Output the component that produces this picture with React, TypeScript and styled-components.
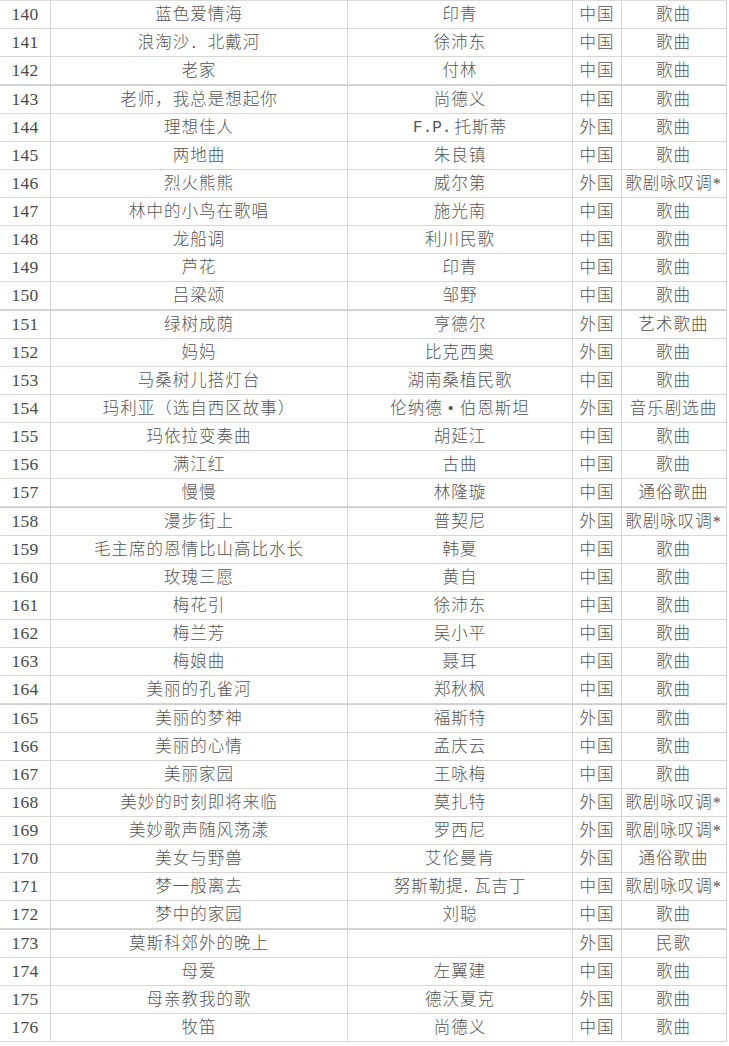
import React from 'react'
import styled, { createGlobalStyle } from 'styled-components'

const GlobalStyle = createGlobalStyle`
  html, body {
    margin: 0;
    padding: 0;
    background: #fff;
  }
  body {
    font-family: "Liberation Serif", "Noto Sans CJK SC", serif;
  }
`

const Sheet = styled.div`
  width: 726px;
  border-top: 1px solid #dcdcdc;
  border-right: 1px solid #d6d6d6;
`

const Row = styled.div<{ $break?: boolean }>`
  display: grid;
  grid-template-columns: 51px 297px 225px 49px 103px;
  height: 28px;
  box-sizing: border-box;
  border-bottom: 1px solid #d6d6d6;
  border-top: ${(p) => (p.$break ? '1px solid #cfcfcf' : 'none')};
  ${(p) => (p.$break ? 'height: 29px;' : '')}
`

const Cell = styled.div<{ $last?: boolean }>`
  display: flex;
  align-items: center;
  justify-content: center;
  white-space: pre;
  overflow: visible;
  border-right: ${(p) => (p.$last ? 'none' : '1px solid #d6d6d6')};
  font-size: 16.5px;
  font-weight: 300;
  letter-spacing: 1px;
  color: #555;
  line-height: 1;
  padding-top: 1px;
`

const Num = styled(Cell)`
  font-size: 17.5px;
  font-weight: 400;
  letter-spacing: 0.3px;
  color: #4a4a4a;
`

// latin initials are set half-width and monospaced, as in the source sheet
const Latin = styled.span`
  font-family: "Liberation Mono", monospace;
  font-size: 16px;
  letter-spacing: 0;
  margin-right: 3px;
`

type Song = [number, string, React.ReactNode, string, string]

const songs: Song[] = [
  [140, '蓝色爱情海', '印青', '中国', '歌曲'],
  [141, '浪淘沙．北戴河', '徐沛东', '中国', '歌曲'],
  [142, '老家', '付林', '中国', '歌曲'],
  [143, '老师，我总是想起你', '尚德义', '中国', '歌曲'],
  [144, '理想佳人', <><Latin>F.P.</Latin>托斯蒂</>, '外国', '歌曲'],
  [145, '两地曲', '朱良镇', '中国', '歌曲'],
  [146, '烈火熊熊', '威尔第', '外国', '歌剧咏叹调*'],
  [147, '林中的小鸟在歌唱', '施光南', '中国', '歌曲'],
  [148, '龙船调', '利川民歌', '中国', '歌曲'],
  [149, '芦花', '印青', '中国', '歌曲'],
  [150, '吕梁颂', '邹野', '中国', '歌曲'],
  [151, '绿树成荫', '亨德尔', '外国', '艺术歌曲'],
  [152, '妈妈', '比克西奥', '外国', '歌曲'],
  [153, '马桑树儿搭灯台', '湖南桑植民歌', '中国', '歌曲'],
  [154, '玛利亚（选自西区故事）', '伦纳德 • 伯恩斯坦', '外国', '音乐剧选曲'],
  [155, '玛依拉变奏曲', '胡延江', '中国', '歌曲'],
  [156, '满江红', '古曲', '中国', '歌曲'],
  [157, '慢慢', '林隆璇', '中国', '通俗歌曲'],
  [158, '漫步街上', '普契尼', '外国', '歌剧咏叹调*'],
  [159, '毛主席的恩情比山高比水长', '韩夏', '中国', '歌曲'],
  [160, '玫瑰三愿', '黄自', '中国', '歌曲'],
  [161, '梅花引', '徐沛东', '中国', '歌曲'],
  [162, '梅兰芳', '吴小平', '中国', '歌曲'],
  [163, '梅娘曲', '聂耳', '中国', '歌曲'],
  [164, '美丽的孔雀河', '郑秋枫', '中国', '歌曲'],
  [165, '美丽的梦神', '福斯特', '外国', '歌曲'],
  [166, '美丽的心情', '孟庆云', '中国', '歌曲'],
  [167, '美丽家园', '王咏梅', '中国', '歌曲'],
  [168, '美妙的时刻即将来临', '莫扎特', '外国', '歌剧咏叹调*'],
  [169, '美妙歌声随风荡漾', '罗西尼', '外国', '歌剧咏叹调*'],
  [170, '美女与野兽', '艾伦曼肯', '外国', '通俗歌曲'],
  [171, '梦一般离去', '努斯勒提. 瓦吉丁', '中国', '歌剧咏叹调*'],
  [172, '梦中的家园', '刘聪', '中国', '歌曲'],
  [173, '莫斯科郊外的晚上', '', '外国', '民歌'],
  [174, '母爱', '左翼建', '中国', '歌曲'],
  [175, '母亲教我的歌', '德沃夏克', '外国', '歌曲'],
  [176, '牧笛', '尚德义', '中国', '歌曲'],
]

const pageBreaks = [143, 151, 158, 165, 173]

const App: React.FC = () => (
  <>
    <GlobalStyle />
    <Sheet>
      {songs.map(([no, title, composer, country, genre]) => (
        <Row key={no} $break={pageBreaks.includes(no)}>
          <Num>{no}</Num>
          <Cell>{title}</Cell>
          <Cell>{composer}</Cell>
          <Cell>{country}</Cell>
          <Cell $last>{genre}</Cell>
        </Row>
      ))}
    </Sheet>
  </>
)

export default App
